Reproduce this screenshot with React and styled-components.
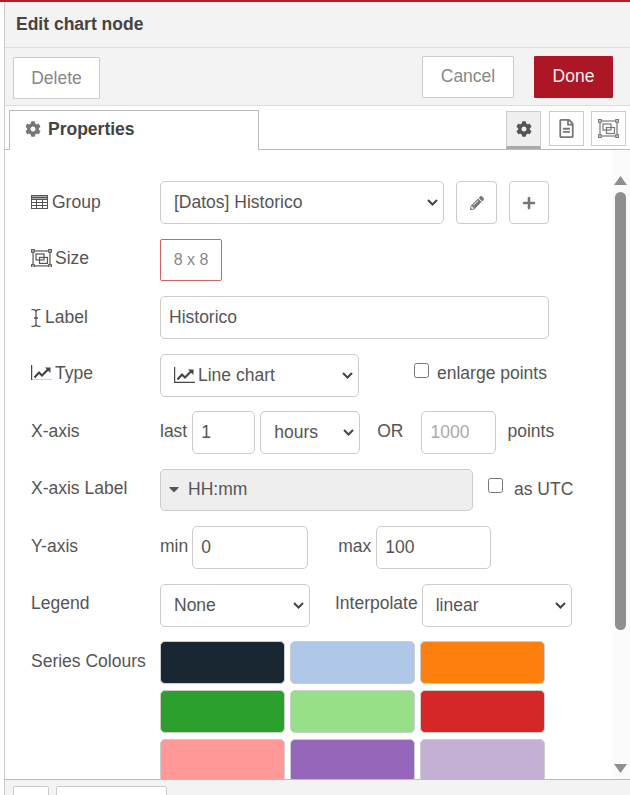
import React from 'react';
import styled, { createGlobalStyle } from 'styled-components';
import { FaCog, FaPencilAlt, FaPlus, FaRegFileAlt, FaCaretDown } from 'react-icons/fa';

const FS = '17.5px';
const chevronUri = `url("data:image/svg+xml,%3Csvg xmlns='http://www.w3.org/2000/svg' viewBox='0 0 11 7' fill='none' stroke='%23444' stroke-width='2'%3E%3Cpath d='M1 1L5.5 5.5L10 1'/%3E%3C/svg%3E")`;
const Global = createGlobalStyle`
  html, body { margin: 0; padding: 0; background: #fff; overflow: hidden; }
  body { font-family: "Liberation Sans", Arial, sans-serif; font-size: ${FS}; color: #555; }
  * { box-sizing: border-box; }
`;
const Shell = styled.div`
  width: 630px; height: 795px; display: flex; flex-direction: column; overflow: hidden;
  border-top: 2px solid #c01a20; background: #fff;
`;
const Tray = styled.div`
  flex: 1; min-height: 0; margin-left: 4px; border-left: 1px solid #ccc; display: flex; flex-direction: column;
`;
const Title = styled.div`
  height: 46px; flex: none; background: #f3f3f3; border-bottom: 1px solid #ddd; padding: 13px 0 0 11px;
  font-weight: bold; font-size: ${FS}; line-height: 18px; color: #444;
`;
const Toolbar = styled.div`
  height: 58px; flex: none; background: #f3f3f3; border-bottom: 1px solid #ddd; display: flex; align-items: flex-start;
  padding: 8px 17px 0 8px;
`;
const Btn = styled.button`
  font: ${FS} "Liberation Sans", Arial, sans-serif; height: 42px; width: ${p => p.$w}px; margin-top: ${p => p.$mt || 0}px;
  margin-left: ${p => p.$ml || 0}px; border-radius: 1px;
  background: ${p => p.$primary ? '#ad1625' : '#fff'}; color: ${p => p.$primary ? '#eee' : '#888'};
  border: 1px solid ${p => p.$primary ? '#ad1625' : '#ccc'}; padding: 0 0 ${p => p.$pb || 0}px;
`;
const TabBar = styled.div`
  height: 44px; flex: none; border-bottom: 1px solid #bbb; display: flex; padding: 4px 4px 0 4px; background: #fff;
`;
const Tab = styled.div`
  width: 250px; height: 40px; border: 1px solid #bbb; border-bottom: none; background: #fff; display: flex; align-items: center;
  padding: 0 0 3px 15px; gap: 7px; font-weight: bold; color: #444; margin-bottom: -1px;
  svg { color: #777; width: 16px; height: 16px; }
`;
const IconBtn = styled.div`
  width: 35px; height: ${p => p.$active ? 38 : 35}px; margin-top: 1px; margin-left: ${p => p.$ml}px; display: flex; align-items: center; justify-content: center;
  border: 1px solid #ccc; border-bottom: ${p => p.$active ? '3px solid #aaa' : '1px solid #ccc'};
  background: ${p => p.$active ? '#efefef' : '#fff'}; color: ${p => p.$active ? '#555' : '#777'};
  svg { width: ${p => p.$icon || 16}px; height: ${p => p.$icon || 16}px; }
`;
const Body = styled.div`flex: 1; min-height: 0; display: flex; background: #fff;`;
const Form = styled.div`
  flex: 1; min-width: 0; overflow: hidden; padding: 31px 0 0 26px; display: flex; flex-direction: column; gap: 14.5px;
`;
const Row = styled.div`display: flex; align-items: flex-start; height: ${p => p.$tall ? 'auto' : '43px'}; flex: none;`;
const Label = styled.div`
  width: 129px; flex: none; display: flex; align-items: center; gap: ${p => p.$gap ?? 4}px; line-height: 18px; padding-top: ${p => p.$pt ?? 11}px;
  color: #555; white-space: nowrap;
`;
const Select = styled.select`
  font: ${FS} "Liberation Sans", Arial, sans-serif; color: #555; border: 1px solid #ccc; border-radius: 5px;
  appearance: none; background: #fff ${chevronUri} no-repeat right 5px center / 11px 7px;
  height: 43px; width: ${p => p.$w}px; margin-left: ${p => p.$ml || 0}px; padding: 0 0 1px 13px; flex: none;
`;
const FakeSelect = styled.div`
  height: 43px; width: 199px; border: 1px solid #ccc; border-radius: 5px; display: flex; align-items: center; padding: 0 5px 0 13px; gap: 3px; flex: none;
  background: #fff ${chevronUri} no-repeat right 5px center / 11px 7px;
`;
const Input = styled.input`
  font: ${FS} "Liberation Sans", Arial, sans-serif; color: #555; background: #fff; border: 1px solid #ccc; border-radius: 5px;
  height: 43px; width: ${p => p.$w}px; margin-left: ${p => p.$ml || 0}px; padding: 0 8px; flex: none;
  &::placeholder { color: #aaa; }
`;
const SizeBtn = styled.div`
  width: 62px; height: 42px; border: 1px solid #d6615f; border-radius: 2px; display: flex; align-items: center; justify-content: center;
  color: #888; font-size: 16px;
`;
const Square = styled.div`
  width: ${p => p.$w}px; height: 43px; margin-left: 12px; border: 1px solid #ccc; border-radius: 4px; display: flex; align-items: center; justify-content: center;
  color: #777; flex: none;
  svg { width: 14px; height: 14px; }
`;
const Text = styled.span`
  margin-left: ${p => p.$ml || 0}px; line-height: 18px; padding-top: ${p => p.$pt ?? 11}px; flex: none; white-space: nowrap; color: #555;
`;
const Check = styled.input.attrs({ type: 'checkbox' })`
  width: 15px; height: 15px; margin: ${p => p.$mt}px 0 0 ${p => p.$ml}px; flex: none; accent-color: #555;
`;
const Disabled = styled.div`
  width: 313px; height: 42px; background: #eee; border: 1px solid #ccc; border-radius: 5px; display: flex; align-items: center; padding: 0 0 1px 5px; gap: 6px; color: #555; flex: none;
  svg { width: 16px; height: 16px; }
`;
const Swatches = styled.div`display: grid; grid-template-columns: repeat(3, 125px); grid-auto-rows: 43px; gap: 6px 5px;`;
const Swatch = styled.div`background: ${p => p.$c}; border: 1px solid #ccc; border-radius: 5px;`;
const Scroll = styled.div`
  width: 17px; flex: none; background: #fafafa; display: flex; flex-direction: column; position: relative; padding: 42px 0 0 2px;
`;
const Thumb = styled.div`width: 11px; height: 438px; background: #8f8f8f; border-radius: 6px;`;
const Arrow = styled.svg`position: absolute; left: 1px; width: 13px; height: 9px; fill: #8f8f8f; top: ${p => p.$top}px;`;
const Footer = styled.div`height: 16px; flex: none; background: #f3f3f3; border-top: 1px solid #bbb; display: flex; padding: 6px 0 0 8px; gap: 7px; overflow: hidden;`;
const FootBtn = styled.div`width: ${p => p.$w}px; height: 30px; flex: none; background: #fff; border: 1px solid #ccc; border-radius: 2px;`;

const TableIcon = () => (
  <svg width="17" height="14" viewBox="0 0 17 14" fill="none" stroke="#555" strokeWidth="1">
    <rect x="0.5" y="0.5" width="16" height="13" />
    <path d="M0 4.5H17M0 7.5H17M0 10.5H17M5.5 4V14M11.5 4V14" />
    <path d="M0 2.5H17" strokeWidth="2" />
  </svg>
);
const GroupIcon = ({ size = 21, color = '#555' }) => (
  <svg width={size} height={size * 0.9} viewBox="0 0 21 19" fill="none" stroke={color} strokeWidth="1.2">
    <rect x="2" y="2" width="17" height="15" />
    <rect x="5" y="5" width="8" height="6" />
    <rect x="8.5" y="8.5" width="8" height="6" />
    <g fill="#fff">
      <rect x="0.6" y="0.6" width="2.6" height="2.6" />
      <rect x="17.8" y="0.6" width="2.6" height="2.6" />
      <rect x="0.6" y="15.8" width="2.6" height="2.6" />
      <rect x="17.8" y="15.8" width="2.6" height="2.6" />
    </g>
  </svg>
);
const CursorIcon = () => (
  <svg width="10" height="18" viewBox="0 0 10 18" fill="none" stroke="#555" strokeWidth="1.3" style={{ marginTop: 3 }}>
    <path d="M0.5 0.7H2.5Q5 0.7 5 3V15Q5 17.3 2.5 17.3H0.5M9.5 0.7H7.5Q5 0.7 5 3M5 15Q5 17.3 7.5 17.3H9.5M3 9H7" />
  </svg>
);
const LineIcon = ({ w = 21 }) => (
  <svg width={w} height={w * 0.76} viewBox="0 0 21 16" fill="none" stroke="#444">
    <path d="M0.6 0V15.4H21" strokeWidth="1.2" />
    <path d="M3.5 12.5L8 7.5L11 10.5L17.5 4" strokeWidth="2.2" />
    <path d="M14 2.5H19.5V8Z" fill="#444" stroke="none" />
  </svg>
);

const colours = ['#192733','#aec7e8','#ff7f0e','#2ca02c','#98df8a','#d62728','#ff9896','#9467bd','#c5b0d5'];

export default function App() {
  return (
    <Shell>
      <Global />
      <Tray>
        <Title>Edit chart node</Title>
        <Toolbar>
          <Btn $w={87} $mt={1}>Delete</Btn>
          <Btn $w={92} $ml={322} $pb={2}>Cancel</Btn>
          <Btn $w={79} $ml={20} $primary $pb={2}>Done</Btn>
        </Toolbar>
        <TabBar>
          <Tab><FaCog />Properties</Tab>
          <IconBtn $active $ml={247}><FaCog /></IconBtn>
          <IconBtn $ml={8} $icon={19}><FaRegFileAlt /></IconBtn>
          <IconBtn $ml={7} $icon={21}><GroupIcon color="#777" /></IconBtn>
        </TabBar>
        <Body>
          <Form>
            <Row>
              <Label $pt={12}><TableIcon />Group</Label>
              <Select $w={284}><option>[Datos] Historico</option></Select>
              <Square $w={41}><FaPencilAlt /></Square>
              <Square $w={40}><FaPlus /></Square>
            </Row>
            <Row>
              <Label $pt={10} $gap={3}><GroupIcon />Size</Label>
              <SizeBtn>8 x 8</SizeBtn>
            </Row>
            <Row>
              <Label $pt={10}><CursorIcon />Label</Label>
              <Input $w={389} defaultValue="Historico" />
            </Row>
            <Row>
              <Label $pt={10} $gap={3}><LineIcon />Type</Label>
              <FakeSelect><LineIcon />Line chart</FakeSelect>
              <Check $mt={9} $ml={55} />
              <Text $ml={8} $pt={10}>enlarge points</Text>
            </Row>
            <Row>
              <Label>X-axis</Label>
              <Text>last</Text>
              <Input $w={63} $ml={5} defaultValue="1" />
              <Select $w={100} $ml={5}><option>hours</option></Select>
              <Text $ml={17}>OR</Text>
              <Input $w={75} $ml={18} placeholder="1000" />
              <Text $ml={11}>points</Text>
            </Row>
            <Row>
              <Label $pt={10}>X-axis Label</Label>
              <Disabled><FaCaretDown />HH:mm</Disabled>
              <Check $mt={9} $ml={15} />
              <Text $ml={11}>as UTC</Text>
            </Row>
            <Row>
              <Label>Y-axis</Label>
              <Text>min</Text>
              <Input $w={116} $ml={4} defaultValue="0" />
              <Text $ml={30}>max</Text>
              <Input $w={115} $ml={5} defaultValue="100" />
            </Row>
            <Row>
              <Label $pt={10}>Legend</Label>
              <Select $w={150}><option>None</option></Select>
              <Text $ml={25} $pt={10}>Interpolate</Text>
              <Select $w={150} $ml={4}><option>linear</option></Select>
            </Row>
            <Row $tall>
              <Label>Series Colours</Label>
              <Swatches>
                {colours.map(c => <Swatch key={c} $c={c} />)}
              </Swatches>
            </Row>
          </Form>
          <Scroll>
            <Arrow $top={26} viewBox="0 0 13 9"><path d="M6.5 0 L13 9 H0 Z" /></Arrow>
            <Thumb />
            <Arrow $top={614} viewBox="0 0 13 9"><path d="M0 0 H13 L6.5 9 Z" /></Arrow>
          </Scroll>
        </Body>
        <Footer>
          <FootBtn $w={36} />
          <FootBtn $w={111} />
        </Footer>
      </Tray>
    </Shell>
  );
}
